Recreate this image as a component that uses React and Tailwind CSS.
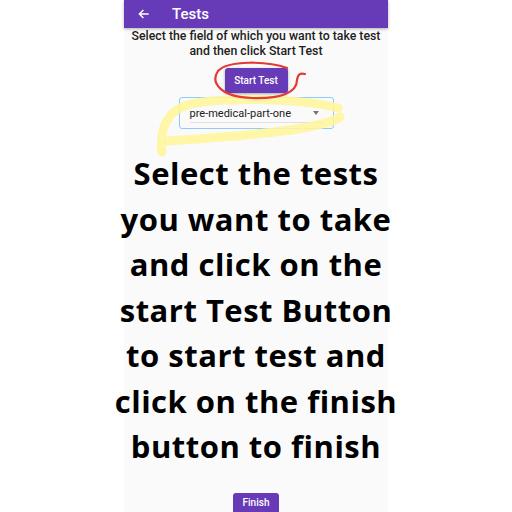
import React from 'react';

function AppBar() {
  return (
    <div className="h-[28px] bg-[#673ab7] flex items-center shadow-[0_1px_3px_rgba(0,0,0,0.3)] relative z-10">
      <svg width="14" height="14" viewBox="0 0 24 24" className="ml-[13px]" fill="none" stroke="white" strokeWidth="2.4">
        <path d="M20 12H5M11 5l-7 7 7 7" />
      </svg>
      <span className="ml-[21px] text-white text-[15px] font-medium leading-none">Tests</span>
    </div>
  );
}

export default function App() {
  return (
    <div className="w-[512px] h-[512px] bg-white overflow-hidden relative" style={{ fontFamily: 'Roboto, "Liberation Sans", sans-serif' }}>
      <div className="w-[264px] h-full ml-[124px] bg-[#fafafa] flex flex-col">
        <AppBar />
        <p className="mt-[1px] -mx-[4px] text-center text-[12.3px] leading-[15px] font-medium text-[#212121]">
          Select the field of which you want to take test
          <br />and then click Start Test
        </p>
        <div className="flex justify-center mt-[9px]">
          <button className="w-[63px] h-[25px] bg-[#673ab7] text-white text-[10px] font-medium rounded-[3px] shadow-[0_1px_3px_rgba(0,0,0,0.35)]">
            Start Test
          </button>
        </div>
        <div className="flex justify-center mt-[4px]">
          <div className="w-[155px] h-[32px] border border-[#90caf9] rounded-[3px] px-[10px] flex flex-col justify-center">
            <div className="flex items-center justify-between border-b border-[#e0e0e0] pb-[3px] mt-[4px]">
              <span className="text-[11px] text-[#212121] leading-none">pre-medical-part-one</span>
              <span className="w-0 h-0 border-l-[3px] border-r-[3px] border-t-[4px] border-l-transparent border-r-transparent border-t-[#757575] mr-[4px]"></span>
            </div>
          </div>
        </div>
        <div
          className="-mx-[24px] mt-[22px] text-center text-black text-[31px] leading-[45.5px] font-bold tracking-[0.5px]"
          style={{ fontFamily: '"Open Sans", Lato, sans-serif' }}
        >
          Select the tests
          <br />you want to take
          <br />and click on the
          <br />start Test Button
          <br />to start test and
          <br />click on the finish
          <br />button to finish
        </div>
        <div className="flex justify-center mt-auto">
          <button className="w-[46px] h-[24px] -mb-[5px] bg-[#673ab7] text-white text-[10px] font-medium rounded-[3px] pb-[5px]">
            Finish
          </button>
        </div>
      </div>
      <svg className="absolute left-0 top-0 pointer-events-none" width="512" height="512" viewBox="0 0 512 512" fill="none">
        <path d="M338 108 C300 98, 210 96, 182 107 C162 116, 160 138, 162 152" stroke="#fff59d" strokeOpacity="0.9" strokeWidth="9" strokeLinecap="round" />
        <path d="M340 117 C322 130, 240 136, 168 141" stroke="#fff59d" strokeOpacity="0.9" strokeWidth="9" strokeLinecap="round" />
        <path d="M287 68 C268 61, 228 60, 218 71 C210 83, 221 97, 252 98 C280 99, 297 93, 297 80 C298 74, 300 73, 305 74" stroke="#e53935" strokeWidth="2.2" strokeLinecap="round" />
        <path d="M386 0 C387 2, 387 4, 385 6" stroke="#e53935" strokeWidth="2" />
      </svg>
    </div>
  );
}
